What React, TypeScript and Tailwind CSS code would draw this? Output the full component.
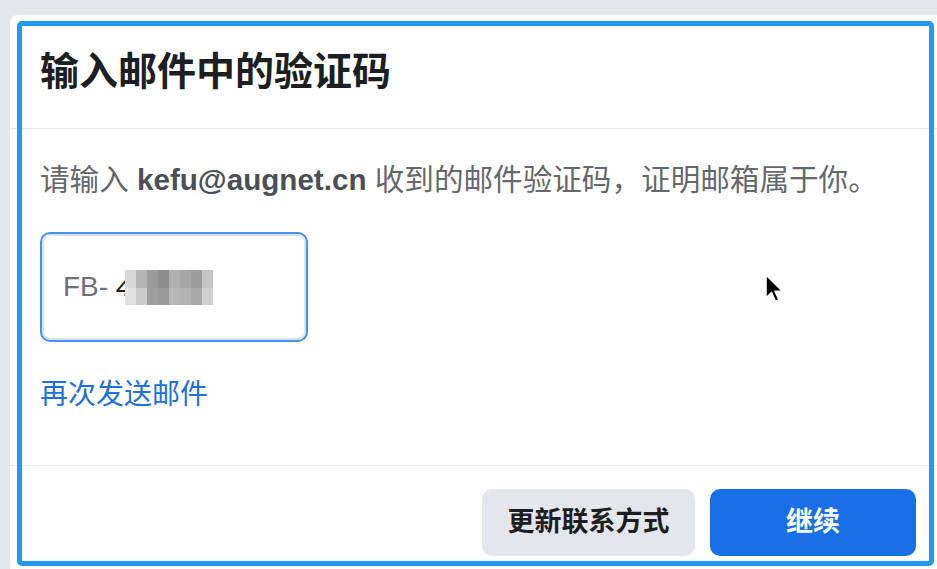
const font = { fontFamily: '"Liberation Sans", "Noto Sans CJK SC", sans-serif' }

// pixelated blur over the rest of the code
const blurTop = ['#d9d9d9', '#b4b4b4', '#9a9a9a', '#8c8c8c', '#b0b0b0', '#a6a6a6', '#9c9c9c', '#c4c4c4']
const blurBottom = ['#e2e2e2', '#cbcbcb', '#9f9f9f', '#9a9a9a', '#b8b8b8', '#b2b2b2', '#a9a9a9', '#cfcfcf']

function Cursor() {
  return (
    <svg width="22" height="32" viewBox="0 0 22 32" className="absolute left-[763px] top-[273px]">
      <path
        d="M3 2 L3 25 L8.5 19.5 L12.5 28.5 L16 27 L12 18.2 L19.5 18.2 Z"
        fill="#000"
        stroke="#fff"
        strokeWidth="1.6"
        strokeLinejoin="round"
      />
    </svg>
  )
}

export default function App() {
  return (
    <div className="relative h-[569px] w-[937px] overflow-hidden bg-[#e4e6eb] pl-[10px] pt-[15px]" style={font}>
      <div className="flex w-[960px] flex-col rounded-tl-[8px] bg-white">
        {/* Header */}
        <div className="flex h-[114px] items-center border-b border-[#e4e6eb] pl-[30px]">
          <h1 className="text-[39px] font-bold leading-none text-[#1c1e21]">输入邮件中的验证码</h1>
        </div>

        {/* Body */}
        <div className="border-b border-[#e9eaed] px-[30px] pb-[52px] pt-[32px]">
          <p className="whitespace-nowrap text-[29.6px] leading-[38px] text-[#65676b]">
            请输入 <span className="font-bold text-[#4b4f56]">kefu@augnet.cn</span> 收到的邮件验证码，证明邮箱属于你。
          </p>

          <div className="mt-[33px] flex h-[110px] w-[268px] items-center rounded-[10px] border-2 border-[#4a8fec] pl-[21px] shadow-[inset_0_0_0_2px_#d5e4fb]">
            <span className="whitespace-pre text-[28px] leading-none text-[#6b6f76]">FB- </span>
            <span className="text-[28px] italic leading-none text-[#1c1e21]">4</span>
            <div className="-ml-[6px] flex flex-col">
              <div className="flex">
                {blurTop.map((c, i) => (
                  <div key={i} className="h-[18px] w-[11px]" style={{ backgroundColor: c }} />
                ))}
              </div>
              <div className="flex">
                {blurBottom.map((c, i) => (
                  <div key={i} className="h-[17px] w-[11px]" style={{ backgroundColor: c }} />
                ))}
              </div>
            </div>
          </div>

          <div className="mt-[35px] text-[28px] leading-[36px] text-[#216fdb]">再次发送邮件</div>
        </div>

        {/* Footer */}
        <div className="flex justify-end gap-[15px] pb-[20px] pr-[54px] pt-[23px]">
          <button className="h-[67px] w-[213px] rounded-[10px] bg-[#e4e6eb] text-[27px] font-semibold text-[#1c1e21]">
            更新联系方式
          </button>
          <button className="h-[67px] w-[206px] rounded-[10px] bg-[#1b6fe6] text-[27px] font-semibold text-white">
            继续
          </button>
        </div>
      </div>

      {/* focus highlight */}
      <div className="pointer-events-none absolute left-[17px] top-[21px] h-[545px] w-[917px] rounded-[5px] border-[5px] border-[#2299f5]" />

      <Cursor />
    </div>
  )
}
